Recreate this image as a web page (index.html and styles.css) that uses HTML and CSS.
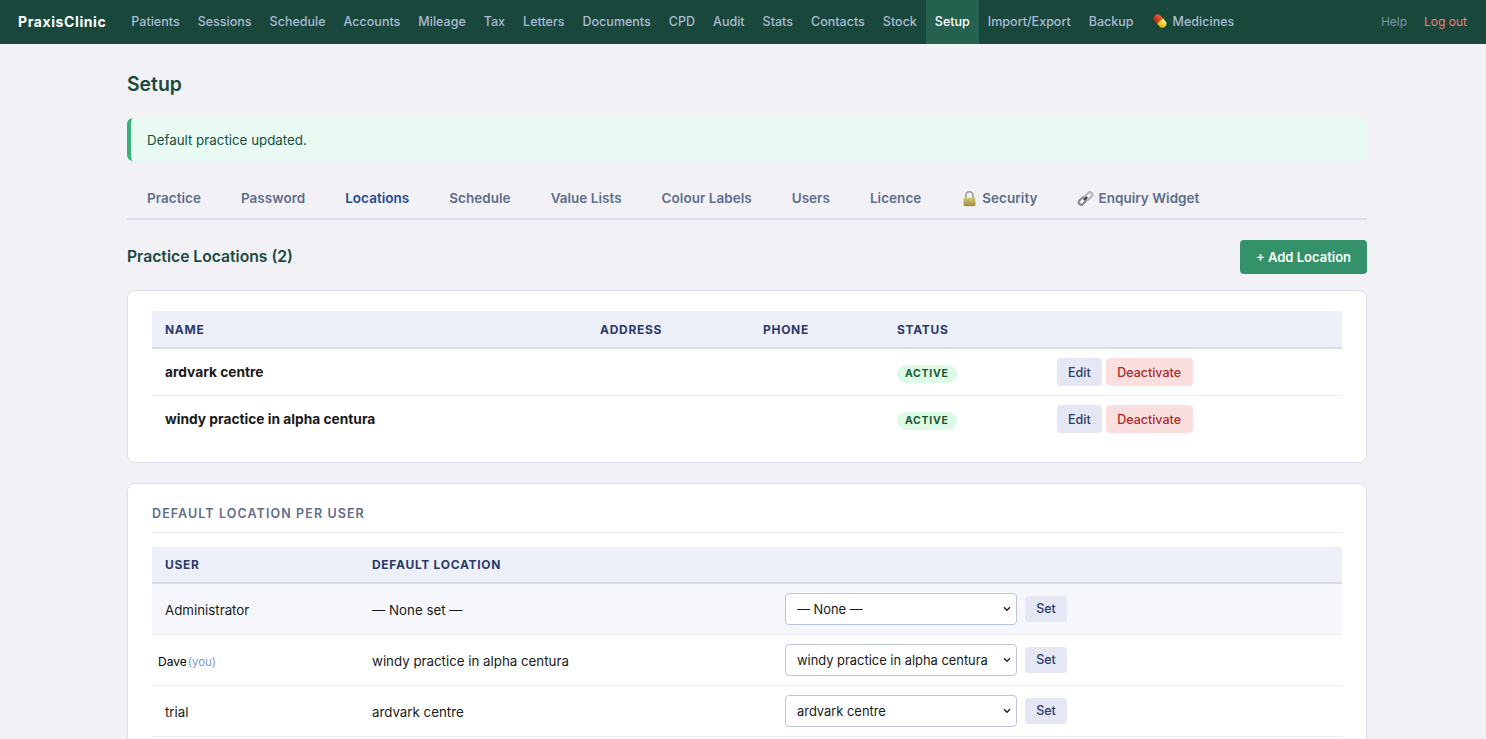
FILE: index.html
```html
<!DOCTYPE html>
<html lang="en">
<head>
<meta charset="utf-8">
<title>Setup - PraxisClinic</title>
<link rel="stylesheet" href="styles.css">
</head>
<body>
<nav class="topnav">
  <a class="brand" href="#">PraxisClinic</a>
  <div class="navlinks">
    <a href="#">Patients</a><a href="#">Sessions</a><a href="#">Schedule</a><a href="#">Accounts</a><a href="#">Mileage</a><a href="#">Tax</a><a href="#">Letters</a><a href="#">Documents</a><a href="#">CPD</a><a href="#">Audit</a><a href="#">Stats</a><a href="#">Contacts</a><a href="#">Stock</a><a href="#" class="active">Setup</a><a href="#">Import/Export</a><a href="#">Backup</a>
    <a href="#" class="withicon"><svg class="emoji" viewBox="0 0 16 16"><defs><linearGradient id="pr" x1="0" y1="0" x2="0" y2="1"><stop offset="0" stop-color="#f0603a"/><stop offset="1" stop-color="#b92c10"/></linearGradient><linearGradient id="py" x1="0" y1="0" x2="0" y2="1"><stop offset="0" stop-color="#fff27a"/><stop offset="1" stop-color="#d9b400"/></linearGradient></defs><g transform="rotate(48 8 8)"><path d="M8 4H4.5a4 4 0 0 0 0 8H8z" fill="url(#pr)"/><path d="M8 4h3.5a4 4 0 0 1 0 8H8z" fill="url(#py)"/></g></svg>Medicines</a>
  </div>
  <div class="navright">
    <a href="#" class="help">Help</a>
    <a href="#" class="logout">Log out</a>
  </div>
</nav>

<main class="page">
  <h1>Setup</h1>
  <div class="alert">Default practice updated.</div>

  <div class="tabs">
    <a href="#">Practice</a><a href="#">Password</a><a href="#" class="current">Locations</a><a href="#">Schedule</a><a href="#">Value Lists</a><a href="#">Colour Labels</a><a href="#">Users</a><a href="#">Licence</a>
    <a href="#" class="tabicon"><svg class="emoji" viewBox="0 0 16 16"><defs><linearGradient id="lk" x1="0" y1="0" x2="0" y2="1"><stop offset="0" stop-color="#d8c878"/><stop offset="1" stop-color="#a08c3c"/></linearGradient></defs><path d="M4.6 8V5a3.4 3.4 0 0 1 6.8 0v3" fill="none" stroke="#9a9a94" stroke-width="1.5"/><rect x="2.4" y="7.4" width="11.2" height="7.8" rx="1" fill="url(#lk)"/></svg>Security</a>
    <a href="#" class="tabicon"><svg class="emoji" viewBox="0 0 16 16"><g fill="none" stroke-width="2"><rect x="1.2" y="8.2" width="7.6" height="4.6" rx="2.3" transform="rotate(-45 5 10.5)" stroke="#8b8d92"/><rect x="7.2" y="3.2" width="7.6" height="4.6" rx="2.3" transform="rotate(-45 11 5.5)" stroke="#b4b6ba"/><path d="M6.5 9.5l3-3" stroke="#3a3c40"/></g></svg>Enquiry Widget</a>
  </div>

  <div class="sectionhead">
    <h2>Practice Locations (2)</h2>
    <button class="btn-primary" type="button">+ Add Location</button>
  </div>

  <section class="card">
    <table class="datatable locations">
      <colgroup><col class="c-name"><col class="c-addr"><col class="c-phone"><col class="c-status"><col></colgroup>
      <thead><tr><th>Name</th><th>Address</th><th>Phone</th><th>Status</th><th></th></tr></thead>
      <tbody>
        <tr><td class="strong">ardvark centre</td><td></td><td></td><td class="statuscell"><span class="badge">Active</span></td><td class="actions"><button class="btn-edit" type="button">Edit</button><button class="btn-danger" type="button">Deactivate</button></td></tr>
        <tr><td class="strong">windy practice in alpha centura</td><td></td><td></td><td class="statuscell"><span class="badge">Active</span></td><td class="actions"><button class="btn-edit" type="button">Edit</button><button class="btn-danger" type="button">Deactivate</button></td></tr>
      </tbody>
    </table>
  </section>

  <section class="card second">
    <h3>Default location per user</h3>
    <table class="datatable users">
      <colgroup><col class="c-user"><col class="c-loc"><col></colgroup>
      <thead><tr><th>User</th><th>Default Location</th><th></th></tr></thead>
      <tbody>
        <tr class="me"><td>Administrator</td><td>— None set —</td><td class="formcell"><div class="setcell"><select><option>— None —</option></select><button class="btn-edit" type="button">Set</button></div></td></tr>
        <tr><td><span class="dave">Dave</span><span class="you">(you)</span></td><td>windy practice in alpha centura</td><td class="formcell"><div class="setcell"><select><option>windy practice in alpha centura</option></select><button class="btn-edit" type="button">Set</button></div></td></tr>
        <tr><td>trial</td><td>ardvark centre</td><td class="formcell"><div class="setcell"><select><option>ardvark centre</option></select><button class="btn-edit" type="button">Set</button></div></td></tr>
      </tbody>
    </table>
  </section>
</main>
</body>
</html>
```
FILE: styles.css
```css
* { box-sizing: border-box; }
html, body { height: 739px; overflow: hidden; }
body { margin: 0; background: #f1f1f6; color: #1a1a1a; font-family: Inter, "Liberation Sans", sans-serif; font-size: 13px; }
a { text-decoration: none; color: inherit; }
.topnav { height: 44px; background: #19473b; display: flex; align-items: stretch; padding: 0 10px 0 18px; }
.brand { color: #fff; font-size: 14px; font-weight: 700; letter-spacing: 0.6px; display: flex; align-items: center; margin-right: 16px; padding-bottom: 1px; }
.navlinks { display: flex; align-items: stretch; }
.navlinks a { color: #a9bcd4; font-size: 12.5px; font-weight: 500; padding: 0 9px 2px; display: flex; align-items: center; letter-spacing: 0.01px; }
.navlinks a.active { background: #25614f; color: #fff; }
.emoji { width: 16px; height: 16px; flex: none; margin-right: 5px; }
.navright { margin-left: auto; display: flex; align-items: center; gap: 17px; padding: 0 9px 2px 0; }
.navright a { font-size: 12px; }
.help { color: #7d98a8; }
.logout { color: #f47c7c; }
.page { width: 1240px; margin-left: 127px; }
h1 { margin: 0; padding-top: 28px; height: 74px; font-size: 19.4px; line-height: 24px; font-weight: 600; color: #1a4a3c; }
.alert { height: 43px; background: #e8faf2; border-left: 4px solid #38b27a; border-radius: 6px; padding-left: 16px; display: flex; align-items: center; font-size: 13.35px; color: #14503f; }
.tabs { margin-top: 19px; height: 40px; display: flex; align-items: flex-start; border-bottom: 2px solid #dcdfee; padding-top: 9px; }
.tabs a { padding: 0 20px; font-size: 13.5px; font-weight: 600; line-height: 18px; letter-spacing: 0.03px; color: #5f6d8c; display: flex; align-items: center; }
.tabs a.current { color: #1f4a96; }
.tabs .emoji { width: 17px; height: 17px; margin-right: 4px; }
.sectionhead { margin-top: 20px; height: 34px; display: flex; justify-content: space-between; align-items: center; }
h2 { margin: 0; padding-bottom: 2px; font-size: 15.7px; font-weight: 600; color: #1a4a3c; }
button { font-family: inherit; border: 0; cursor: pointer; }
.btn-primary { background: #33926a; color: #fff; height: 34px; width: 127px; border-radius: 4px; font-size: 13px; font-weight: 600; }
.card { margin-top: 16px; background: #fff; border: 1px solid #dcdfe8; border-radius: 8px; padding: 20px 24px; height: 173px; }
.card.second { margin-top: 20px; height: 300px; }
h3 { margin: 0 0 14px; height: 29px; padding-top: 2px; border-bottom: 1px solid #e9ebf2; font-size: 12.5px; font-weight: 600; letter-spacing: 1.1px; line-height: 16px; text-transform: uppercase; color: #5f6d8c; }
.datatable { width: 100%; border-collapse: collapse; table-layout: fixed; }
.datatable th { height: 37px; background: #edf0f8; border-bottom: 2px solid #d8dce9; padding: 0 13px; text-align: left; font-size: 12px; font-weight: 700; letter-spacing: 0.7px; text-transform: uppercase; color: #2c3a6a; }
.users th { height: 36px; }
.datatable td { padding: 0 13px; border-bottom: 1px solid #eceef4; font-size: 13.3px; }
.locations td { height: 47px; }
.locations tbody tr:last-child td { border-bottom: 0; }
.datatable .statuscell { padding-top: 5px; }
.users td { height: 51px; padding-top: 2px; }
.users td.formcell { padding-top: 0; }
.c-name { width: 435px; }
.c-addr { width: 163px; }
.c-phone { width: 134px; }
.c-status { width: 160px; }
.c-user { width: 207px; }
.c-loc { width: 413px; }
.datatable .strong { font-weight: 700; font-size: 13.75px; }
.badge { display: inline-block; vertical-align: middle; height: 18px; line-height: 18px; padding: 0 8px; border-radius: 9px; background: #dcfae6; color: #1c5a36; font-size: 10.5px; font-weight: 700; letter-spacing: 0.7px; text-transform: uppercase; }
.actions button + button { margin-left: 4px; }
.btn-edit { background: #e5e7f4; color: #2c3a6a; height: 28px; padding: 1px 11px 0; border-radius: 4px; font-size: 12.5px; font-weight: 500; }
.btn-danger { background: #fbdfdf; color: #b02a2a; height: 28px; padding: 1px 11.5px 0; border-radius: 4px; font-size: 12.5px; font-weight: 500; }
.me td { background: #f6f7fc; }
.dave { font-size: 12px; margin-left: -7px; color: #000; }
.you { font-size: 11.5px; margin-left: 1px; color: #7b96cc; }
.setcell { display: flex; align-items: center; gap: 8px; }
.setcell select { appearance: none; width: 232px; height: 32px; background: #fff url("data:image/svg+xml,%3Csvg xmlns='http://www.w3.org/2000/svg' width='8' height='6' viewBox='0 0 8 6'%3E%3Cpath d='M1 1.3l3 3 3-3' fill='none' stroke='%23222' stroke-width='1.4'/%3E%3C/svg%3E") no-repeat right 5px center; border: 1px solid #b9c4de; border-radius: 4px; padding: 2px 20px 0 11px; font-family: inherit; font-size: 12.9px; color: #1a1a1a; }
.setcell .btn-edit { height: 26px; padding: 0 10px; width: 42px; font-size: 12.5px; font-weight: 500; }
```
